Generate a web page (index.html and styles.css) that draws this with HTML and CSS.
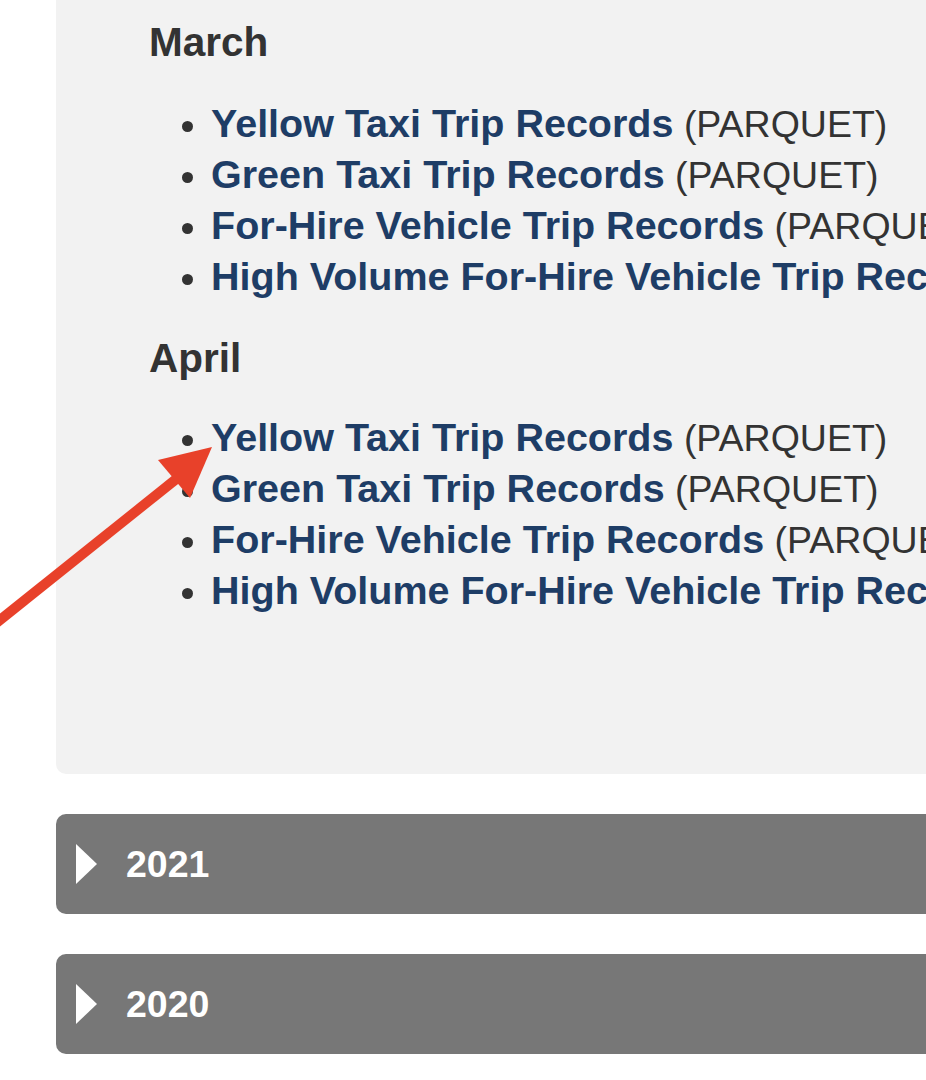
FILE: index.html
```html
<!DOCTYPE html>
<html lang="en">
<head>
    <meta charset="UTF-8">
    <meta name="viewport" content="width=device-width, initial-scale=1.0">
    <title>TLC Trip Record Data</title>
    <link rel="stylesheet" href="styles.css">
</head>
<body>

    <div class="year-panel">
        <h3>March</h3>
        <ul class="files">
            <li><a href="#">Yellow Taxi Trip Records</a> <span>(PARQUET)</span></li>
            <li><a href="#">Green Taxi Trip Records</a> <span>(PARQUET)</span></li>
            <li><a href="#">For-Hire Vehicle Trip Records</a> <span>(PARQUET)</span></li>
            <li><a href="#">High Volume For-Hire Vehicle Trip Records</a> <span>(PARQUET)</span></li>
        </ul>

        <h3>April</h3>
        <ul class="files">
            <li><a href="#">Yellow Taxi Trip Records</a> <span>(PARQUET)</span></li>
            <li><a href="#">Green Taxi Trip Records</a> <span>(PARQUET)</span></li>
            <li><a href="#">For-Hire Vehicle Trip Records</a> <span>(PARQUET)</span></li>
            <li><a href="#">High Volume For-Hire Vehicle Trip Records</a> <span>(PARQUET)</span></li>
        </ul>
    </div>

    <div class="year-bar">
        <span class="caret"></span>
        <span class="year">2021</span>
    </div>
    <div class="year-bar">
        <span class="caret"></span>
        <span class="year">2020</span>
    </div>

    <!-- annotation arrow drawn on top of the page -->
    <svg class="arrow" width="926" height="1080" viewBox="0 0 926 1080">
        <line x1="-20" y1="636" x2="180" y2="476" stroke="#e8412a" stroke-width="10"/>
        <polygon points="212,447 158,460 190,498" fill="#e8412a"/>
    </svg>

</body>
</html>
```

FILE: styles.css
```css
* {
    box-sizing: border-box;
    margin: 0;
    padding: 0;
}
body {
    font-family: "Liberation Sans", Arial, Helvetica, sans-serif;
    background-color: #fff;
    color: #333;
    overflow: hidden;
    position: relative;
}
.year-panel {
    margin-left: 56px;
    padding: 18px 0 126px 93px;
    background-color: #f2f2f2;
    border-radius: 0 0 0 10px;
    overflow: hidden;
    white-space: nowrap;
}
.year-panel h3 {
    font-size: 40.5px;
    line-height: 48px;
    font-weight: bold;
    color: #333;
    margin-bottom: 30px;
}
.year-panel h3:first-child {
    margin-bottom: 32px;
}
.files {
    padding-left: 62px;
    margin-bottom: 32px;
}
.files li {
    height: 51px;
    line-height: 51px;
    font-size: 37.5px;
    color: #333;
}
.files a {
    font-size: 39.5px;
    font-weight: bold;
    color: #1e3d66;
    text-decoration: none;
}
.year-bar {
    display: flex;
    align-items: center;
    height: 100px;
    margin: 40px 0 0 56px;
    padding-left: 20px;
    background-color: #777;
    border-radius: 10px 0 0 10px;
}
.caret {
    width: 0;
    height: 0;
    border-top: 20px solid transparent;
    border-bottom: 20px solid transparent;
    border-left: 21px solid #fff;
    margin-right: 29px;
}
.year {
    font-size: 37.5px;
    line-height: 37px;
    font-weight: bold;
    color: #fff;
    padding-top: 1px;
}
.arrow {
    position: absolute;
    top: 0;
    left: 0;
    pointer-events: none;
}
```
